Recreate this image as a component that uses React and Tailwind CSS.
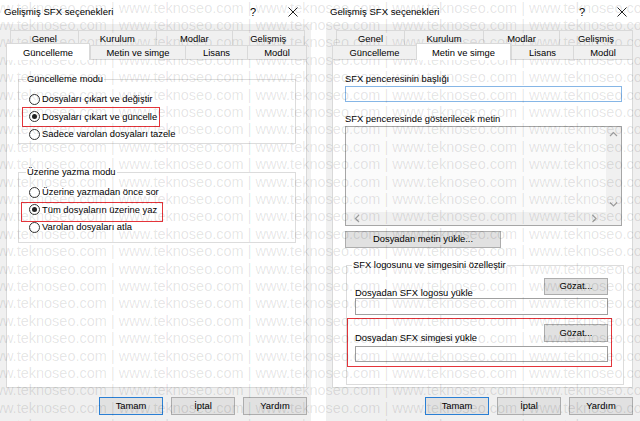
import React from 'react';

const topTabs = [
  ['Genel', 68],
  ['Kurulum', 79],
  ['Modlar', 76],
  ['Gelişmiş', 74],
];

const bottomTabs = [
  ['Güncelleme', 84],
  ['Metin ve simge', 95],
  ['Lisans', 62],
  ['Modül', 60],
];

function Chevron({ dir }) {
  const pts = {
    up: '1,5 4.5,1.5 8,5',
    down: '1,1.5 4.5,5 8,1.5',
    left: '5,1 1.5,4.5 5,8',
    right: '1.5,1 5,4.5 1.5,8',
  }[dir];
  const vertical = dir === 'up' || dir === 'down';
  return (
    <svg
      width={vertical ? 9 : 7}
      height={vertical ? 7 : 9}
      viewBox={vertical ? '0 0 9 7' : '0 0 7 9'}
      fill="none"
      stroke="#9c9c9c"
      strokeWidth="1.2"
    >
      <polyline points={pts} />
    </svg>
  );
}

function Tabs({ active }) {
  return (
    <div>
      <div className="ml-[4px] flex h-[15px]">
        {topTabs.map(([label, w], i) => (
          <div
            key={label}
            style={{ width: w }}
            className={`flex items-center justify-center border-t border-l border-[#d9d9d9] bg-[#f0f0f0] pt-[1px] leading-[15px] ${
              i === topTabs.length - 1 ? 'border-r' : ''
            }`}
          >
            {label}
          </div>
        ))}
      </div>
      <div className="relative z-10 flex h-[14px]">
        {bottomTabs.map(([label, w], i) =>
          label === active ? (
            <div
              key={label}
              style={{ width: w }}
              className="-mt-[2px] flex h-[17px] shrink-0 items-start justify-center border-x border-t border-[#d9d9d9] bg-white pt-[3px] leading-[12px]"
            >
              {label}
            </div>
          ) : (
            <div
              key={label}
              style={{ width: w }}
              className={`flex h-[14px] shrink-0 items-center justify-center border-t border-l border-[#d9d9d9] bg-[#f0f0f0] pt-[1px] ${
                i === bottomTabs.length - 1 ? 'border-r' : ''
              }`}
            >
              {label}
            </div>
          )
        )}
      </div>
    </div>
  );
}

function Button({ children, primary, className = '' }) {
  return (
    <div
      className={`flex items-center justify-center bg-[#e1e1e1] ${
        primary ? 'border-[1.5px] border-[#2a7fd4]' : 'border border-[#adadad]'
      } ${className}`}
    >
      {children}
    </div>
  );
}

function Dialog({ active, className = '', children }) {
  return (
    <div className={`flex h-full flex-col ${className}`}>
      <div className="flex h-[24px] shrink-0 items-center bg-white pl-[4px] pr-[11px]">
        <span className="flex-1 text-[9.6px]">Gelişmiş SFX seçenekleri</span>
        <span className="w-[12px] text-center text-[11px]">?</span>
        <span className="ml-[27px] flex w-[14px] justify-center">
          <svg width="10" height="10" viewBox="0 0 10 10" stroke="#222" strokeWidth="1">
            <line x1="0.5" y1="0.5" x2="9.5" y2="9.5" />
            <line x1="9.5" y1="0.5" x2="0.5" y2="9.5" />
          </svg>
        </span>
      </div>
      <div className="flex-1 bg-[#f0f0f0] px-[6px] pt-[6px]">
        <Tabs active={active} />
        <div className="h-[329px] w-[301px] border border-[#d9d9d9] bg-white">{children}</div>
        <div className="mt-[9px] flex w-[301px] justify-end gap-[8px]">
          <Button primary className="h-[18px] w-[64px]">Tamam</Button>
          <Button className="h-[18px] w-[64px]">İptal</Button>
          <Button className="h-[18px] w-[64px]">Yardım</Button>
        </div>
      </div>
    </div>
  );
}

function Radio({ label, checked, mark }) {
  return (
    <div className="relative flex h-[17.5px] items-center">
      <span className="flex h-[11px] w-[11px] items-center justify-center rounded-full border border-[#333] bg-white">
        {checked && <span className="h-[5px] w-[5px] rounded-full bg-[#222]" />}
      </span>
      <span className="ml-[2px]">{label}</span>
      {mark && <span className={`pointer-events-none absolute border-[1.5px] border-[#e5343a] ${mark}`} />}
    </div>
  );
}

function GroupBox({ title, className = '', children }) {
  return (
    <fieldset className={`border border-[#dcdcdc] ${className}`}>
      <legend className="-ml-[3px] px-[1px] leading-[12px]">{title}</legend>
      {children}
    </fieldset>
  );
}

function UpdatePage() {
  return (
    <div className="pl-[11px]">
      <GroupBox title="Güncelleme modu" className="mt-[13px] w-[278px] pl-[10px] pt-[5.5px]">
        <Radio label="Dosyaları çıkart ve değiştir" />
        <Radio label="Dosyaları çıkart ve güncelle" checked mark="-left-[7px] -top-[1px] h-[20px] w-[138px]" />
        <Radio label="Sadece varolan dosyaları tazele" />
      </GroupBox>
      <GroupBox title="Üzerine yazma modu" className="mt-[22px] w-[278px] pb-[6px] pl-[10px] pt-[5.5px]">
        <Radio label="Üzerine yazmadan önce sor" />
        <Radio label="Tüm dosyaların üzerine yaz" checked mark="-left-[8px] top-[1px] h-[20px] w-[142px]" />
        <Radio label="Varolan dosyaları atla" />
      </GroupBox>
    </div>
  );
}

function TextPage() {
  return (
    <div className="pl-[12px] pt-[13px]">
      <div className="leading-[12px]">SFX penceresinin başlığı</div>
      <div className="mt-[1px] h-[16px] w-[277px] border border-[#86b6e6] bg-white" />
      <div className="mt-[11px] leading-[12px]">SFX penceresinde gösterilecek metin</div>
      <div className="mt-[1px] flex h-[100px] w-[277px] flex-col border border-[#a6a6a6] bg-[#fbfbfb]">
        <div className="flex flex-1">
          <div className="flex-1" />
          <div className="flex w-[15px] flex-col items-center justify-between bg-[#f0f0f0] py-[4px]">
            <Chevron dir="up" />
            <Chevron dir="down" />
          </div>
        </div>
        <div className="flex h-[13px]">
          <div className="flex flex-1 items-center justify-between bg-[#f0f0f0] px-[8px]">
            <Chevron dir="left" />
            <Chevron dir="right" />
          </div>
          <div className="w-[15px] bg-[#f0f0f0]" />
        </div>
      </div>
      <Button className="mt-[5px] h-[17px] w-[156px]">Dosyadan metin yükle...</Button>
      <GroupBox title="SFX logosunu ve simgesini özelleştir" className="ml-[1px] mt-[11px] w-[278px] pb-[22px] pl-[8px] pr-[15px] pt-[7px]">
        <div className="flex h-[20px] justify-between">
          <span className="self-end leading-[10px]">Dosyadan SFX logosu yükle</span>
          <Button className="h-[17px] w-[64px]">Gözat...</Button>
        </div>
        <div className="h-[17px] border border-[#a0a0a0] bg-white" />
        <div className="relative mt-[9px]">
          <div className="flex h-[22px] justify-between">
            <span className="mb-[3px] self-end leading-[10px]">Dosyadan SFX simgesi yükle</span>
            <Button className="h-[18px] w-[64px]">Gözat...</Button>
          </div>
          <div className="h-[16px] border border-[#a0a0a0] bg-white" />
          <span className="pointer-events-none absolute -left-[8px] -top-[6px] h-[49px] w-[265px] border-[1.5px] border-[#e5343a]" />
        </div>
      </GroupBox>
    </div>
  );
}

const stamp = 'www.teknoseo.com | '.repeat(6);

export default function App() {
  return (
    <div className="relative flex h-[421px] w-[640px] overflow-hidden bg-white font-['Liberation_Sans',Arial,sans-serif] text-[9.4px] text-black">
      <Dialog active="Güncelleme" className="w-[311px]">
        <UpdatePage />
      </Dialog>
      <Dialog active="Metin ve simge" className="ml-[15px] w-[314px]">
        <TextPage />
      </Dialog>

      {/* site watermark laid across the whole shot */}
      <div className="pointer-events-none absolute inset-0 -mt-[0.3px] overflow-hidden">
        {Array.from({ length: 25 }).map((_, i) => (
          <div
            key={i}
            className="-ml-[18px] h-[17.4px] whitespace-pre text-[14.5px] leading-[17.4px] text-black/[0.11]"
          >
            {stamp}
          </div>
        ))}
      </div>
    </div>
  );
}
